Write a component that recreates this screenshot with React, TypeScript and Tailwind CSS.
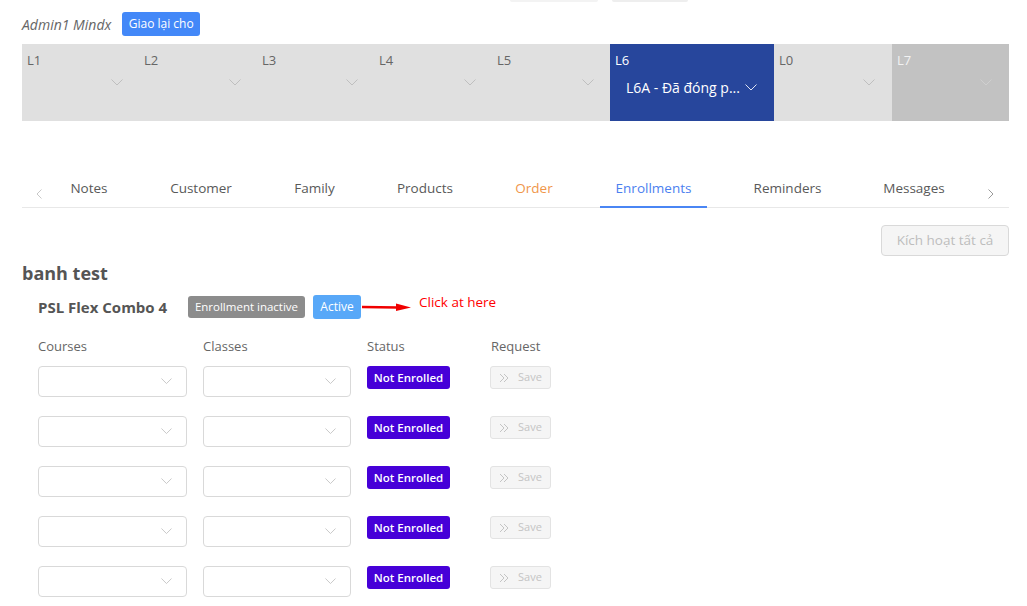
import React from "react";

const Chevron = ({ color = "#bfbfbf", w = 12 }: { color?: string; w?: number }) => (
  <svg width={w} height={w / 2 + 1} viewBox="0 0 12 7" fill="none">
    <polyline points="0.5,0.5 6,6 11.5,0.5" stroke={color} strokeWidth="1" />
  </svg>
);

const levels = [
  { l: "L1", w: "w-[117px]" },
  { l: "L2", w: "w-[118px]" },
  { l: "L3", w: "w-[117px]" },
  { l: "L4", w: "w-[118px]" },
  { l: "L5", w: "w-[118px]" },
];

const tabs = [
  { t: "Notes", w: "w-[68px]", c: "text-[#595959]" },
  { t: "Customer", w: "w-[92px]", c: "text-[#595959]" },
  { t: "Family", w: "w-[71px]", c: "text-[#595959]" },
  { t: "Products", w: "w-[86px]", c: "text-[#595959]" },
  { t: "Order", w: "w-[68px]", c: "text-[#f0964a]" },
  { t: "Enrollments", w: "w-[107px]", c: "text-[#4b7ff0]", active: true },
  { t: "Reminders", w: "w-[97px]", c: "text-[#595959]" },
  { t: "Messages", w: "w-[92px]", c: "text-[#595959]" },
];

const Select = ({ w }: { w: string }) => (
  <div className={`${w} h-[31px] border border-[#d9d9d9] rounded-[4px] bg-white flex items-center justify-end pr-[14px]`}>
    <Chevron color="#c4c4c4" w={11} />
  </div>
);

const Row = () => (
  <div className="flex items-start h-[50px]">
    <Select w="w-[149px]" />
    <div className="w-[16px]" />
    <Select w="w-[148px]" />
    <div className="w-[16px]" />
    <div className="w-[123px] flex items-start">
      <div className="flex h-[23px] w-[83px] justify-center bg-[#4600d8] rounded-[3px] text-white text-[11.5px] font-semibold items-center">
        Not Enrolled
      </div>
    </div>
    <div className="h-[23px] w-[61px] border border-[#e3e3e3] bg-[#f5f5f5] rounded-[3px] flex items-center pl-[8px] gap-[9px] text-[11px] text-[#c4c4c4]">
      <svg width="10" height="10" viewBox="0 0 10 10" fill="none">
        <polyline points="1,1 5,5 1,9" stroke="#c4c4c4" strokeWidth="1" />
        <polyline points="5,1 9,5 5,9" stroke="#c4c4c4" strokeWidth="1" />
      </svg>
      <span>Save</span>
    </div>
  </div>
);

export default function App() {
  return (
    <div
      className="w-[1027px] h-[606px] overflow-hidden bg-white relative"
      style={{ fontFamily: '"Open Sans", "Noto Sans", sans-serif' }}
    >
      {/* cut-off buttons at top */}
      <div className="flex h-[3px]">
        <div className="ml-[510px] w-[88px] h-[2px] bg-[#f3f3f3] rounded-b-[3px]" />
        <div className="ml-[14px] w-[76px] h-[2px] bg-[#eeeeee] rounded-b-[3px]" />
      </div>

      <div className="pl-[22px] w-[1009px]">
        {/* header */}
        <div className="flex items-center h-[24px] mt-[9px]">
          <span className="italic text-[14px] text-[#666]">Admin1 Mindx</span>
          <div className="ml-[11px] h-[24px] w-[78px] justify-center bg-[#4388f8] rounded-[3px] text-white text-[12px] flex items-center">
            Giao lại cho
          </div>
        </div>

        {/* levels bar */}
        <div className="flex mt-[8px] h-[77px]">
          {levels.map((lv) => (
            <div key={lv.l} className={`${lv.w} bg-[#e0e0e0] flex flex-col`}>
              <div className="pl-[5px] pt-[7px] text-[13px] leading-[18px] text-[#666]">{lv.l}</div>
              <div className="flex justify-end pr-[16px] mt-[10px]">
                <Chevron />
              </div>
            </div>
          ))}
          <div className="w-[164px] bg-[#27469c] flex flex-col">
            <div className="pl-[5px] pt-[7px] text-[13px] leading-[18px] text-white">L6</div>
            <div className="flex items-center pl-[16px] mt-[8px] text-[14px] text-white">
              <span>L6A - Đã đóng p...</span>
              <span className="ml-[5px]">
                <Chevron color="#dfe4f2" />
              </span>
            </div>
          </div>
          <div className="w-[118px] bg-[#e0e0e0] flex flex-col">
            <div className="pl-[5px] pt-[7px] text-[13px] leading-[18px] text-[#666]">L0</div>
            <div className="flex justify-end pr-[17px] mt-[10px]">
              <Chevron />
            </div>
          </div>
          <div className="w-[117px] bg-[#c2c2c2] flex flex-col">
            <div className="pl-[5px] pt-[7px] text-[13px] leading-[18px] text-[#f2f2f2]">L7</div>
            <div className="flex justify-end pr-[17px] mt-[10px]">
              <Chevron color="#cfcfcf" />
            </div>
          </div>
        </div>

        {/* tabs */}
        <div className="mt-[49px] flex items-stretch h-[38px] border-b border-[#e8e8e8]">
          <div className="w-[33px] flex items-center justify-center pt-[10px]">
            <svg width="6" height="10" viewBox="0 0 6 10" fill="none">
              <polyline points="5.5,0.5 1,5 5.5,9.5" stroke="#c8c8c8" strokeWidth="1" />
            </svg>
          </div>
          <div className="flex gap-[32px] flex-1">
            {tabs.map((t) => (
              <div
                key={t.t}
                className={`${t.w} ${t.c} relative flex items-center justify-center text-[13.5px] ${t.active ? "font-medium" : ""}`}
              >
                {t.t}
                {t.active && <div className="absolute left-0 right-0 bottom-[-1px] h-[2px] bg-[#4a86f4]" />}
              </div>
            ))}
          </div>
          <div className="w-[36px] flex items-center justify-center pt-[10px]">
            <svg width="6" height="10" viewBox="0 0 6 10" fill="none">
              <polyline points="0.5,0.5 5,5 0.5,9.5" stroke="#9a9a9a" strokeWidth="1" />
            </svg>
          </div>
        </div>

        {/* activate all */}
        <div className="flex justify-end mt-[17px]">
          <div className="w-[128px] h-[31px] border border-[#d9d9d9] bg-[#f5f5f5] rounded-[4px] text-[13.5px] text-[#bdbdbd] flex items-center justify-center">
            Kích hoạt tất cả
          </div>
        </div>

        {/* title */}
        <div className="mt-[4px] text-[18px] font-bold text-[#555] leading-[26px]">banh test</div>

        {/* product line */}
        <div className="flex items-center mt-[9px] pl-[16px] h-[24px]">
          <span className="text-[15px] font-bold text-[#555] w-[150px]">PSL Flex Combo 4</span>
          <div className="h-[22px] w-[117px] justify-center bg-[#8c8c8c] rounded-[3px] text-white text-[11.5px] flex items-center">
            Enrollment inactive
          </div>
          <div className="ml-[8px] h-[24px] w-[48px] bg-[#58a8f8] rounded-[3px] text-white text-[12px] flex items-center justify-center">
            Active
          </div>
          <svg width="50" height="10" viewBox="0 0 50 10" className="ml-[1px]">
            <line x1="0" y1="5" x2="36" y2="5.5" stroke="#f00000" strokeWidth="2.5" />
            <polygon points="34,1.5 49,5.5 34,9" fill="#f00000" />
          </svg>
          <span className="ml-[7px] -mt-[9px] text-[13.5px] text-[#ff0000]">
            Click at here
          </span>
        </div>

        {/* column headers */}
        <div className="flex mt-[18px] pl-[16px] text-[13px] text-[#666] h-[20px] items-center">
          <span className="w-[165px]">Courses</span>
          <span className="w-[164px]">Classes</span>
          <span className="w-[124px]">Status</span>
          <span>Request</span>
        </div>

        {/* rows */}
        <div className="mt-[9px] pl-[16px] flex flex-col">
          <Row />
          <Row />
          <Row />
          <Row />
          <Row />
        </div>
      </div>
    </div>
  );
}
